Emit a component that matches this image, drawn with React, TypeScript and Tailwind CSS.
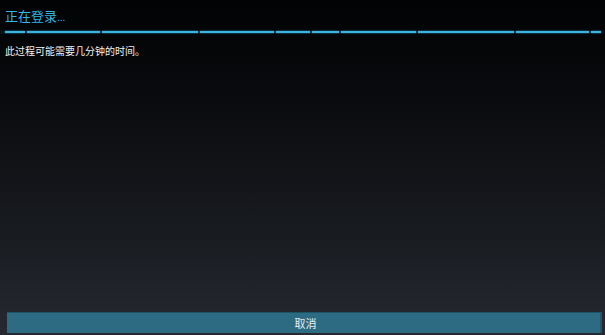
const segments = [20, 73, 96, 74, 34, 27, 75, 96, 73, 10];

export default function App() {
  return (
    <div
      className="w-[605px] h-[335px] flex flex-col bg-gradient-to-b from-[#020304] via-[#111317] to-[#262930] text-white overflow-hidden"
      style={{ fontFamily: '"Noto Sans CJK SC", "Noto Sans", sans-serif' }}
    >
      <div className="pl-[5px] pt-[8px] h-[29px] text-[13px] leading-[16px] text-[#33b5e5]">
        正在登录<span className="text-[10px]">...</span>
      </div>
      <div className="flex gap-[2px] pl-[5px] mt-[1px] py-[1px] bg-[#04121a] w-fit">
        {segments.map((w, i) => (
          <div
            key={i}
            className="h-[2px] bg-[#3cb4dc] shadow-[0_0_2px_rgba(51,181,229,0.7)]"
            style={{ width: w }}
          />
        ))}
      </div>
      <div className="pl-[5px] mt-[11px] text-[10px] leading-[12px] text-[#f2f2f2]">
        此过程可能需要几分钟的时间。
      </div>
      <div className="flex-1" />
      <div className="pl-[7px] pr-[3px]">
        <button className="w-full h-[21px] bg-[#2d6b83] border-t border-[#1e5366] border-r-2 border-r-[#24556a] text-[11px] leading-[20px] text-[#e8eef0] pl-[4px]">
          取消
        </button>
      </div>
      <div className="h-[2px]" />
    </div>
  );
}
